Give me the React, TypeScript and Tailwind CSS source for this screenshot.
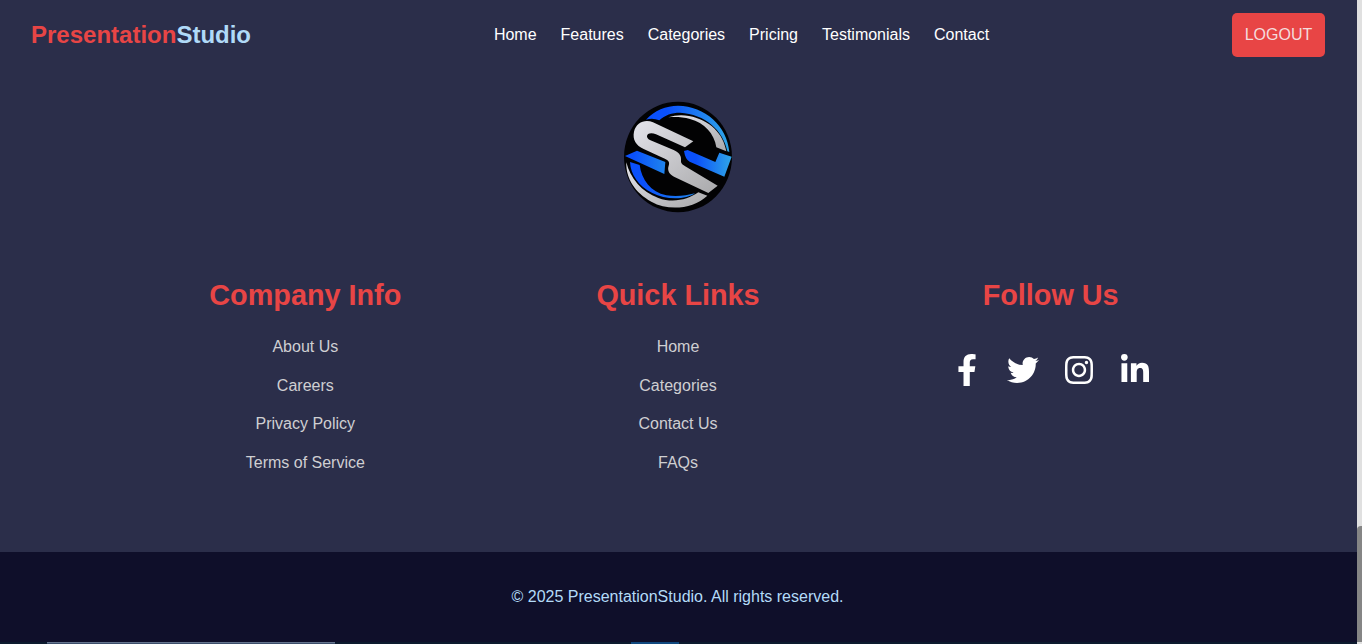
import React from "react";
import { FaFacebookF, FaInstagram, FaLinkedinIn, FaTwitter } from "react-icons/fa";

const navItems = ["Home", "Features", "Categories", "Pricing", "Testimonials", "Contact"];

const columns = [
  { title: "Company Info", links: ["About Us", "Careers", "Privacy Policy", "Terms of Service"] },
  { title: "Quick Links", links: ["Home", "Categories", "Contact Us", "FAQs"] },
];

const socials = [
  { name: "Facebook", Icon: FaFacebookF },
  { name: "Twitter", Icon: FaTwitter },
  { name: "Instagram", Icon: FaInstagram },
  { name: "LinkedIn", Icon: FaLinkedinIn },
];

function Emblem() {
  return (
    <svg viewBox="0 0 378 378" className="size-[126px]" role="img" aria-label="Company logo">
      <defs>
        <linearGradient id="blue" x1="0" x2="1" y1="0" y2="0">
          <stop offset="0.25" stopColor="#0a50fb" />
          <stop offset="1" stopColor="#2fa6e6" />
        </linearGradient>
        <linearGradient id="bar" x1="0" x2="1" y1="0" y2="0">
          <stop offset="0.2" stopColor="#0a50fb" />
          <stop offset="1" stopColor="#1f84ec" />
        </linearGradient>
        <linearGradient id="silver" x1="0" x2="1" y1="0" y2="1">
          <stop offset="0" stopColor="#e4e4ea" />
          <stop offset="1" stopColor="#a9a9ab" />
        </linearGradient>
      </defs>
      <ellipse cx="189" cy="195" rx="162" ry="166" fill="#020203" />
      <path d="M93 83C118 55 153 41 189 41C270 43 336 100 343 180L337 178C325 115 270 66 195 62C170 62 150 69 133 85Q113 76 93 83Z" fill="url(#blue)" />
      <path d="M160 76C180 69 202 68 222 72C285 84 325 125 334 178L304 166C298 125 268 92 225 81C203 75 180 74 160 76Z" fill="url(#silver)" />
      <path d="M45 210L74 219C80 264 107 300 154 310C184 315 215 311 240 304C211 324 151 324 112 303C70 282 47 248 45 210Z" fill="url(#bar)" />
      <path d="M34 211C45 258 80 300 130 318C174 334 219 323 250 301L277 311C234 350 163 359 109 329C61 303 32 260 34 211Z" fill="url(#silver)" />
      <path d="M30 192L66 176L151 210L148 246Z" fill="url(#bar)" />
      <path d="M207 177L218 174L301 210L313 182L350 194L328 254L224 209Q211 203 207 177Z" fill="url(#blue)" />
      <path d="M235 148L210 166L123 127C109 121 95 124 96 134C97 140 103 143 110 146L176 174C197 184 199 195 198 205C197 215 203 219 213 224L308 281L280 303L177 254C160 245 157 232 161 221C166 207 157 203 143 197L86 171C63 160 52 142 57 119C63 91 91 80 114 91Z" fill="url(#silver)" />
    </svg>
  );
}

function Column({ title, children }: { title: string; children: React.ReactNode }) {
  return (
    <section className="flex flex-col items-center">
      <h2 className="text-[28.8px] leading-[44px] font-bold text-[#e84545]">{title}</h2>
      {children}
    </section>
  );
}

export default function App() {
  return (
    <div className="flex h-[644px] w-[1362px] overflow-hidden bg-[#2b2e4a] font-['Liberation_Sans',Arial,sans-serif] text-base text-white">
      <div className="flex w-[1357px] flex-col">
        <header className="flex h-[70px] shrink-0 items-center justify-between pr-8 pl-[31px]">
          <a className="text-2xl font-bold text-[#e84545]">
            Presentation<span className="text-[#b0daf8]">Studio</span>
          </a>
          <nav className="flex gap-6">
            {navItems.map((item) => (
              <a key={item}>{item}</a>
            ))}
          </nav>
          <button className="h-11 w-[93px] rounded-[5px] bg-[#e84545] text-[#f4dcdc]">LOGOUT</button>
        </header>

        <footer className="flex grow flex-col">
          <div className="flex h-[203px] justify-center pt-[22px] pr-[2px]">
            <Emblem />
          </div>
          <div className="grid grow grid-cols-3 pr-[120px] pl-[119px]">
            {columns.map(({ title, links }) => (
              <Column key={title} title={title}>
                <ul className="flex flex-col items-center gap-[14.7px] pt-[18px] text-[#cfcfd2]">
                  {links.map((link) => (
                    <li key={link}>{link}</li>
                  ))}
                </ul>
              </Column>
            ))}
            <Column title="Follow Us">
              <div className="flex gap-6 pt-[37px]">
                {socials.map(({ name, Icon }) => (
                  <a key={name} aria-label={name}>
                    <Icon className="size-8" />
                  </a>
                ))}
              </div>
            </Column>
          </div>
          <div className="flex h-[90px] items-center justify-center bg-[#0f0f2a] pr-[2px] text-[#b3dbf8]">
            <p>© 2025 PresentationStudio. All rights reserved.</p>
          </div>
          <div className="flex h-0.5 bg-[#0c1a2e]">
            <div className="ml-[47px] w-72 border-t border-[#66758e] bg-[#3c4e6b]" />
            <div className="ml-[296px] w-12 bg-[#11497f]" />
          </div>
        </footer>
      </div>
      <div className="flex w-[5px] flex-col justify-end bg-[#e0e0e0] pb-0.5">
        <div className="h-[116px] rounded-tl-sm bg-[#858585]" />
      </div>
    </div>
  );
}
